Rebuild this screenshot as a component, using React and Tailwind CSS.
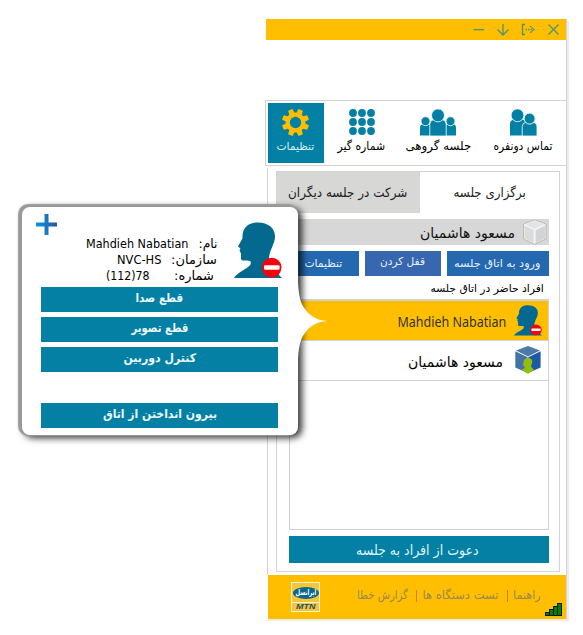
import React, { useLayoutEffect, useRef, useState } from "react";

// One line of text, stretched or condensed to the width of its label box.
function Label({ w, className = "", children, ltr = false }) {
  const ref = useRef(null);
  const [scale, setScale] = useState(1);
  useLayoutEffect(() => {
    setScale(w / ref.current.offsetWidth);
  }, [w]);
  return (
    <span className={"flex shrink-0 justify-center whitespace-nowrap " + className} style={{ width: w }}>
      <span ref={ref} dir={ltr ? "ltr" : "rtl"} className="block shrink-0" style={{ transform: `scaleX(${scale})` }}>
        {children}
      </span>
    </span>
  );
}

function HeadIcon({ className }) {
  return (
    <svg viewBox="0 0 48 56" className={className} preserveAspectRatio="none">
      <path
        d="M0 55 C4 49 13 46 16 42.5 C17.5 40.5 17 38.5 15 38 C12 37.5 8 38.5 7 36.5 L7 31 L5.5 28 L6.5 26 L4 24 L8.5 16 C8 5 15 0.5 24 0.5 C34 0.5 41 6 41 14 C41 22 35 28 35 36 C36 43 42 49 48 55 Z"
        fill="#04698f"
      />
      <circle cx="37.7" cy="44.8" r="9.8" fill="#f8000c" />
      <rect x="30" y="42.6" width="15.6" height="4.2" rx="1" fill="#fff" />
    </svg>
  );
}

function WindowControls() {
  return (
    <svg width="88" height="21" viewBox="473 19 88 21" fill="none" stroke="#4b9478" strokeWidth="1.3">
      <path d="M473.5 29.7H484" />
      <path d="M503 24V35M497.5 29.5L503 35L508.5 29.5" />
      <path d="M525 24.5H522.5V34.5H525" />
      <path d="M525.5 29.5H534" strokeDasharray="1.5 1" />
      <path d="M530 26L534 29.5L530 33" strokeDasharray="1.6 .6" />
      <path d="M548.5 24.5L558.5 34.5M558.5 24.5L548.5 34.5" />
    </svg>
  );
}

function Gear() {
  return (
    <svg width="27" height="27" viewBox="-13.5 -13.5 27 27">
      <g fill="#ffbf00" transform="rotate(22.5)">
        {[0, 45, 90, 135, 180, 225, 270, 315].map((a) => (
          <path key={a} d="M-2.9 -8.5L-2.3 -13.6H2.3L2.9 -8.5Z" transform={`rotate(${a})`} />
        ))}
      </g>
      <circle r="7.8" fill="none" stroke="#ffbf00" strokeWidth="4.2" />
    </svg>
  );
}

function Keypad() {
  return (
    <svg width="26" height="26" viewBox="0 0 26 26" fill="#0480a5">
      {[4, 13, 22].map((y) => [4, 13, 22].map((x) => <circle key={x + "-" + y} cx={x} cy={y} r="3.9" />))}
    </svg>
  );
}

function Group() {
  return (
    <svg width="36" height="27" viewBox="0 0 36 27" fill="#0480a5">
      <path d="M0 26.5V19Q0 15.5 3 15H8Q10.5 15.5 10.5 19V26.5ZM25.5 26.5V19Q25.5 15.5 28 15H33Q36 15.5 36 19V26.5Z" />
      <circle cx="5.5" cy="12.2" r="4.5" stroke="#fff" strokeWidth=".8" />
      <circle cx="30.5" cy="12.2" r="4.5" stroke="#fff" strokeWidth=".8" />
      <path d="M9.8 27V15Q10 11 14 10.5H22Q26 11 26.2 15V27Z" stroke="#fff" strokeWidth=".8" />
      <circle cx="18" cy="6.4" r="6.5" stroke="#fff" strokeWidth=".8" />
    </svg>
  );
}

function Pair() {
  return (
    <svg width="27" height="27" viewBox="0 0 27 27" fill="#0480a5">
      <path d="M0 26.5V15Q0 11 4 10.5H12Q16 11 16 15V26.5Z" />
      <circle cx="7.5" cy="6.3" r="6.4" stroke="#fff" strokeWidth=".8" />
      <path d="M12.2 27V17.5Q12.5 13.8 16 13.2H23.5Q27 14 27 17.5V27Z" stroke="#fff" strokeWidth=".8" />
      <circle cx="19.6" cy="9.6" r="5.5" stroke="#fff" strokeWidth=".9" />
    </svg>
  );
}

function GreyCube() {
  return (
    <svg width="24" height="26" viewBox="0 0 24 26" strokeLinejoin="round">
      <path d="M11.5 .8L23 5V20L11.5 25.3L.5 20V5Z" fill="#f4f4f4" stroke="#b0b0b0" strokeWidth=".8" />
      <path d="M11.5 1.8L21 5.4L11.5 10L2.5 5.4Z" fill="#e4e5e5" />
      <path d="M1.6 6.6L10.6 11.2V24L1.6 19.5Z" fill="#dadbdc" />
      <path d="M22 6.6L12.6 11.2V24L22 19.5Z" fill="#d3d4d5" />
    </svg>
  );
}

function BlueCube() {
  return (
    <svg width="26" height="28" viewBox="0 0 26 28">
      <path d="M13 0L25 4.6L13 10.6L1 4.6Z" fill="#4e79a8" />
      <path d="M.3 5.2L12.6 11.3V27L.3 21.5Z" fill="#4372ab" />
      <path d="M25.6 5.2L13.3 11.3V27L25.6 21.5Z" fill="#1d5aa4" />
      <path d="M8.5 16.5Q8.5 12 13 12Q17.5 12 17.3 16L16 20.3Q16.5 22 19.3 24L13 27.8L6.5 24Q10 22 10.2 20.5H8.8L8 18.5Z" fill="#94bd0c" />
    </svg>
  );
}

function BrandLogo() {
  return (
    <div className="flex h-[30px] w-[29px] flex-col overflow-hidden border border-[#fff4cf] bg-[#f5c63c]">
      <div className="flex h-[19px] items-center justify-center">
        <div className="flex h-[12px] w-[26px] items-center justify-center rounded-[50%] bg-[#07688a] text-[8px] leading-[12px] font-bold text-white">
          <Label w={21}>ایرانسل</Label>
        </div>
      </div>
      <div className="flex h-[9px] justify-center border-t border-[#fff4cf] font-['Liberation_Sans',sans-serif] text-[8px] leading-[8px] font-bold text-[#17506a] italic">
        <Label w={19} ltr>MTN</Label>
      </div>
    </div>
  );
}

function Signal() {
  return (
    <svg width="17" height="13" viewBox="0 0 17 13" fill="#008000" stroke="#0a1a00" strokeWidth="1">
      <rect x=".5" y="9.5" width="4" height="3" />
      <rect x="4.5" y="6.5" width="4" height="6" />
      <rect x="8.5" y="3.5" width="4" height="9" />
      <rect x="12.5" y=".5" width="4" height="12" />
    </svg>
  );
}

function Popup() {
  return (
    <div className="absolute top-[207px] left-[22px] h-[228px] w-[276px]">
      <div className="absolute inset-0 rounded-[8px] bg-white shadow-[-2px_-1px_1px_2px_#999,3px_2px_7px_1px_rgba(0,0,0,0.8)]" />
      <svg className="absolute top-[76px] left-[273px]" width="33" height="76" viewBox="-1 0 33 76">
        <path d="M-1 0H2C3 17 6 22 9 26C14 33 20 37 31 38C20 39 14 43 9 50C6 54 3 59 2 76H-1Z" fill="#fff" />
      </svg>
      <div className="relative flex flex-col">
        <div className="flex h-[80px]">
          <svg className="mt-[7px] ml-[14px] shrink-0" width="21" height="21" viewBox="0 0 21 21">
            <defs>
              <linearGradient id="plus" gradientUnits="userSpaceOnUse" x1="0" y1="12" x2="21" y2="8">
                <stop stopColor="#069bdc" />
                <stop offset="1" stopColor="#2b53a5" />
              </linearGradient>
            </defs>
            <path d="M8.5 0H12.5V8.5H21V12.5H12.5V21H8.5V12.5H0V8.5H8.5Z" fill="url(#plus)" />
          </svg>
          <div className="ml-[7px] flex w-[153px] flex-col pt-[29px] text-[13px] leading-[16px] text-black">
            <div className="flex h-4 justify-end gap-[10px]">
              <Label w={102} ltr>Mahdieh Nabatian</Label>
              <Label w={19}>نام:</Label>
            </div>
            <div className="flex h-4 justify-end gap-[10px]">
              <Label w={44} ltr>NVC-HS</Label>
              <Label w={46}>سازمان:</Label>
            </div>
            <div className="flex h-4 justify-end gap-[24px] pr-[3px]">
              <Label w={44} ltr>(112)78</Label>
              <Label w={40}>شماره:</Label>
            </div>
          </div>
          <HeadIcon className="mt-[15px] ml-[17px] h-[57px] w-[48px] shrink-0" />
        </div>
        <div className="ml-[19px] flex w-[237px] flex-col gap-[5px] text-[12px] leading-[23px] font-bold text-[#eaf8fc]">
          <div className="flex h-[25px] justify-center bg-[#0480a5]"><Label w={48}>قطع صدا</Label></div>
          <div className="flex h-[25px] justify-center bg-[#0480a5]"><Label w={57}>قطع تصویر</Label></div>
          <div className="flex h-[25px] justify-center bg-[#0480a5]"><Label w={73}>کنترل دوربین</Label></div>
          <div className="mt-[26px] flex h-[25px] justify-center bg-[#0480a5]"><Label w={114}>بیرون انداختن از اتاق</Label></div>
        </div>
      </div>
    </div>
  );
}

export default function App() {
  return (
    <div className="relative h-[635px] w-[583px] overflow-hidden bg-white font-['DejaVu_Sans',sans-serif]">
      <div className="pt-[19px] pl-[265px]">
        <div className="flex h-[600px] w-[302px] flex-col border-r border-[#d3d3d3] bg-white shadow-[2px_2px_1px_#ececec]">
          <header className="ml-px flex h-[21px] justify-end bg-[#ffbf00] pr-[5px]">
            <WindowControls />
          </header>
          <div className="h-[60px]" />
          <nav className="flex h-[66px] border-y border-l border-[#d3d3d3] pt-[2px] pl-[2px] text-[12px] leading-[16px] text-black">
            <div className="flex h-[60px] w-[56px] flex-col items-center bg-[#0480a5] pt-[6px] pr-[2px] text-[#d5f0f8]">
              <Gear />
              <Label w={38} className="mt-[3px] text-[11px]">تنظیمات</Label>
            </div>
            <div className="flex w-[75px] flex-col items-center pt-[6px]">
              <Keypad />
              <Label w={48} className="mt-[3px]">شماره گیر</Label>
            </div>
            <div className="ml-[6px] flex w-[66px] flex-col items-center pt-[6px]">
              <Group />
              <Label w={66} className="mt-[2px]">جلسه گروهی</Label>
            </div>
            <div className="ml-[22px] flex w-[59px] flex-col items-center pt-[6px]">
              <div className="pl-[2px]"><Pair /></div>
              <Label w={59} className="mt-[2px]">تماس دونفره</Label>
            </div>
          </nav>
          <main className="mt-[2px] ml-[2px] h-[407px] border-l border-[#d3d3d3] pt-[3px] pl-[8px]">
            <section className="h-[401px] w-[284px] border border-[#d3d3d3]">
              <div className="flex h-[41px] text-[13px] leading-[42px] text-[#222]">
                <div className="flex w-[143px] justify-center bg-[#d7d7d5] pr-[2px]">
                  <Label w={119}>شرکت در جلسه دیگران</Label>
                </div>
                <div className="flex flex-1 justify-center">
                  <Label w={72}>برگزاری جلسه</Label>
                </div>
              </div>
              <div className="ml-[12px] flex w-[260px] flex-col">
                <div className="mt-[6px] flex h-[26px] justify-end gap-[8px] bg-[#d7d7d7] pr-[2px] text-[14px] leading-[28px] text-[#111]">
                  <Label w={95}>مسعود هاشمیان</Label>
                  <GreyCube />
                </div>
                <div className="mt-[6px] flex h-[25px] gap-[6px] text-[11px] leading-[26px] text-[#e8f0fa]">
                  <div className="flex w-[70px] justify-end bg-[#2469b0] pr-[17px]"><Label w={38}>تنظیمات</Label></div>
                  <div className="flex w-[76px] justify-center bg-[#3767ae] pr-[2px] leading-[22px]"><Label w={45}>قفل کردن</Label></div>
                  <div className="flex w-[102px] justify-center bg-[#2469b0] pr-[2px]"><Label w={86}>ورود به اتاق جلسه</Label></div>
                </div>
                <div className="flex h-[23px] justify-end pr-[5px] text-[11px] leading-[25px] text-black">
                  <Label w={113}>افراد حاضر در اتاق جلسه</Label>
                </div>
                <div className="flex h-[231px] flex-col border border-t-2 border-[#d0d0d0] text-black">
                  <div className="flex h-[40px] justify-end border-b border-[#d3d3d3] bg-[#ffbf00] pr-[6px]">
                    <Label w={109} ltr className="mr-[8px] font-['Noto_Sans',sans-serif] text-[14px] leading-[41px] text-[#333]">Mahdieh Nabatian</Label>
                    <HeadIcon className="mt-[4px] h-[31px] w-[28px]" />
                  </div>
                  <div className="flex h-[40px] justify-end border-b border-[#d3d3d3] pr-[7px]">
                    <Label w={95} className="mr-[12px] text-[14px] leading-[42px]">مسعود هاشمیان</Label>
                    <div className="pt-[5px]"><BlueCube /></div>
                  </div>
                </div>
                <div className="mt-[6px] flex h-[27px] justify-center bg-[#0480a5] pr-[3px] text-[14px] leading-[28px] text-[#dff3f9]">
                  <Label w={123}>دعوت از افراد به جلسه</Label>
                </div>
              </div>
            </section>
          </main>
          <footer className="ml-[3px] flex h-[44px] bg-[#ffbf00] pr-[4px] text-[12px] leading-[41px] text-[#998a50]">
            <div className="ml-[23px] pt-[7px]"><BrandLogo /></div>
            <Label w={51} className="ml-[37px]">گزارش خطا</Label>
            <div className="mt-[15px] ml-[8px] h-[12px] w-px bg-[#b9873d]" />
            <Label w={76} className="ml-[6px]">تست دستگاه ها</Label>
            <div className="mt-[15px] ml-[8px] h-[12px] w-px bg-[#b9873d]" />
            <Label w={28} className="ml-[6px]">راهنما</Label>
            <div className="mt-[28px] ml-[4px] shrink-0"><Signal /></div>
          </footer>
        </div>
      </div>
      <Popup />
    </div>
  );
}
